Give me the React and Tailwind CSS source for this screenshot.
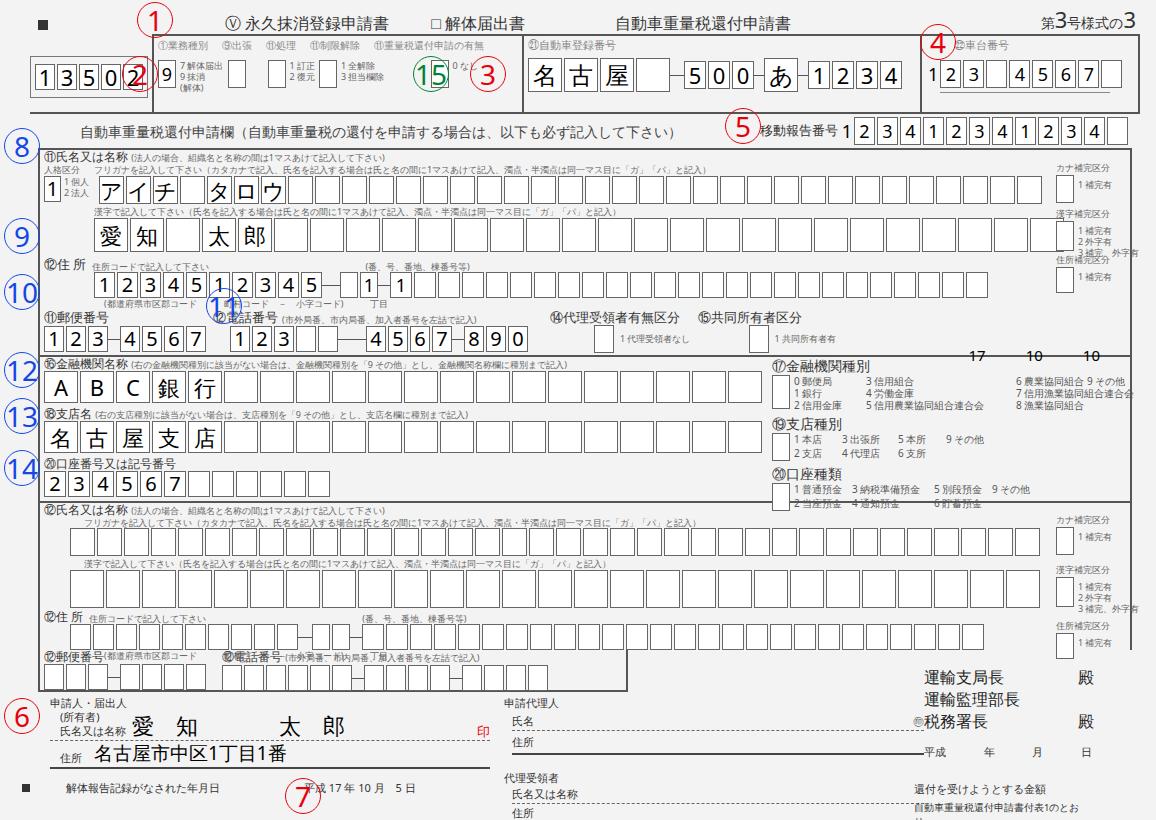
import React from "react";

const B = ({ c = "", w = "w-[25px]", h = "h-[28px]", t = "text-[20px]" }) => (
  <div className={`${w} ${h} ${t} shrink-0 border border-[#666] bg-white flex items-center justify-center leading-none text-black`}>{c}</div>
);
const Row = ({ chars = [], n, w, h, t, gap = "gap-[2px]" }) => (
  <div className={`flex ${gap}`}>
    {Array.from({ length: n }).map((_, i) => <B key={i} c={chars[i] || ""} w={w} h={h} t={t} />)}
  </div>
);
const Dash = ({ w = "w-[12px]" }) => <div className={`${w} h-px bg-[#555] self-center shrink-0`} />;
const Circ = ({ n, cls, color = "text-red-600 border-red-600" }) => (
  <div className={`absolute ${cls} ${color} w-[36px] h-[36px] rounded-full border-[1.5px] flex items-center justify-center text-[28px] leading-none font-['Liberation_Sans',sans-serif] bg-transparent`}>{n}</div>
);
const Small = ({ children, cls = "" }) => <div className={`text-[9px] leading-[11px] text-[#666] whitespace-nowrap ${cls}`}>{children}</div>;
const Side = ({ title, lines, h = "h-[28px]", top = "-top-[14px]" }) => (
  <div className={`absolute right-[4px] ${top} w-[66px]`}>
    <Small>{title}</Small>
    <div className="flex gap-[4px] mt-[2px]"><B w="w-[18px]" h={h} /><Small cls="mt-[4px]">{lines}</Small></div>
  </div>
);

export default function App() {
  const kana = "アイチ タロウ".split("");
  return (
    <div className="relative w-[1156px] h-[820px] bg-[#f3f3f3] overflow-hidden text-[#333] font-['Noto_Sans_CJK_JP',sans-serif]">
      {/* header */}
      <div className="flex items-end h-[34px] pl-[38px] pr-[20px]">
        <div className="w-[10px] h-[10px] bg-[#333] mb-[4px]" />
        <div className="ml-[177px] text-[16px] leading-[22px]">Ⓥ 永久抹消登録申請書</div>
        <div className="ml-[42px] text-[16px] leading-[22px]">□ 解体届出書</div>
        <div className="ml-[90px] text-[16px] leading-[22px]">自動車重量税還付申請書</div>
        <div className="ml-auto text-[14px] leading-[22px]">第<span className="text-[22px] font-['Liberation_Sans']">3</span>号様式の<span className="text-[22px] font-['Liberation_Sans']">3</span></div>
      </div>
      {/* top boxes */}
      <div className="flex h-[78px] ml-[30px] w-[1110px]">
        <div className="w-[118px] mt-[22px] h-[42px] border border-[#777] flex items-center justify-center">
          <Row n={5} chars={["1", "3", "5", "0", "2"]} w="w-[20px]" h="h-[26px]" t="text-[22px]" />
        </div>
        <div className="w-[370px] ml-[4px] border-t-2 border-l-2 border-[#555] px-[4px] pt-[2px]">
          <div className="flex gap-[14px] text-[10px] leading-[14px] text-[#888]"><span>①業務種別</span><span>⑨出張</span><span>⑪処理</span><span>⑪制限解除</span><span>⑪重量税還付申請の有無</span></div>
          <div className="flex items-start gap-[4px] mt-[8px]">
            <B c="9" w="w-[18px]" h="h-[28px]" t="text-[18px]" />
            <Small>7 解体届出<br />9 抹消<br />(解体)</Small>
            <B w="w-[18px]" h="h-[28px]" />
            <div className="w-[14px]" />
            <B w="w-[18px]" h="h-[28px]" />
            <Small>1 訂正<br />2 復元</Small>
            <B w="w-[18px]" h="h-[28px]" />
            <Small>1 全解除<br />3 担当欄除</Small>
            <div className="w-[38px]" />
            <B w="w-[18px]" h="h-[28px]" />
            <Small>0 なし</Small>
          </div>
        </div>
        <div className="w-[398px] border-t-2 border-l-2 border-[#555] px-[4px] pt-[2px]">
          <div className="text-[11px] leading-[14px] text-[#888]">㉑自動車登録番号</div>
          <div className="flex items-center mt-[6px]">
            <Row n={4} chars={["名", "古", "屋"]} w="w-[34px]" h="h-[34px]" t="text-[24px]" />
            <Dash w="w-[14px]" />
            <Row n={3} chars={["5", "0", "0"]} w="w-[22px]" h="h-[28px]" t="text-[22px]" />
            <Dash w="w-[10px]" />
            <B c="あ" w="w-[34px]" h="h-[34px]" t="text-[24px]" />
            <Dash w="w-[10px]" />
            <Row n={4} chars={["1", "2", "3", "4"]} w="w-[22px]" h="h-[28px]" t="text-[22px]" />
          </div>
        </div>
        <div className="flex-1 border-t-2 border-l-2 border-r-2 border-[#555] px-[6px] pt-[2px]">
          <div className="text-[11px] leading-[14px] text-[#888] ml-[26px]">㉒車台番号</div>
          <div className="flex items-center gap-[2px] mt-[8px]">
            <span className="text-[18px] text-black">1</span>
            <Row n={8} chars={["2", "3", "", "4", "5", "6", "7", ""]} w="w-[21px]" h="h-[28px]" t="text-[18px]" />
          </div>
          <div className="h-[3px] mt-[2px] ml-[12px] w-[170px] border-b border-[#888]" />
        </div>
      </div>
      {/* subtitle + moving report */}
      <div className="flex items-center h-[36px] ml-[30px] w-[1110px] border-t-2 border-[#555]">
        <div className="ml-[50px] text-[14px] text-[#444]">自動車重量税還付申請欄（自動車重量税の還付を申請する場合は、以下も必ず記入して下さい）</div>
        <div className="ml-auto flex items-center gap-[2px] pr-[12px]">
          <span className="text-[13px] mr-[2px]">移動報告番号</span>
          <span className="text-[18px] text-black">1</span>
          <Row n={12} chars={["2", "3", "4", "1", "2", "3", "4", "1", "2", "3", "4", ""]} w="w-[21px]" h="h-[28px]" t="text-[18px]" />
        </div>
      </div>
      {/* main box */}
      <div className="ml-[38px] w-[1094px] h-[502px] border-2 border-[#555] border-b-0 relative">
        <div className="px-[4px]">
          <div className="h-[14px] text-[12px] leading-[14px]">⑪氏名又は名称 <span className="text-[9px] text-[#666]">(法人の場合、組織名と名称の間は1マスあけて記入して下さい)</span></div>
          <div className="flex gap-[6px] h-[12px]"><Small>人格区分</Small><Small cls="ml-[8px]">フリガナを記入して下さい（カタカナで記入、氏名を記入する場合は氏と名の間に1マスあけて記入、濁点・半濁点は同一マス目に「ガ」「パ」と記入）</Small></div>
          <div className="relative flex items-start gap-[3px] h-[28px]">
            <B c="1" w="w-[17px]" h="h-[26px]" />
            <Small cls="w-[32px]">1 個人<br />2 法人</Small>
            <Row n={35} chars={kana} w="w-[25px]" h="h-[28px]" t="text-[22px]" />
            <Side title="カナ補完区分" lines="1 補完有" />
          </div>
          <Small cls="ml-[50px] h-[14px] pt-[2px]">漢字で記入して下さい（氏名を記入する場合は氏と名の間に1マスあけて記入、濁点・半濁点は同一マス目に「ガ」「パ」と記入）</Small>
          <div className="relative flex items-start h-[34px]">
            <div className="w-[50px]" />
            <Row n={27} chars={["愛", "知", "", "太", "郎"]} w="w-[34px]" h="h-[34px]" t="text-[22px]" />
            <Side title="漢字補完区分" lines={<>1 補完有<br />2 外字有<br />3 補完、外字有</>} h="h-[30px]" top="-top-[10px]" />
          </div>
          <div className="flex items-end gap-[6px] h-[20px]"><span className="text-[13px] leading-[16px]">⑫住 所</span><Small>住所コードで記入して下さい</Small><Small cls="ml-[150px]">(番、号、番地、棟番号等)</Small></div>
          <div className="relative flex items-center h-[26px]">
            <div className="w-[50px]" />
            <Row n={10} chars={"1234512345".split("")} w="w-[21px]" h="h-[26px]" t="text-[20px]" />
            <Dash w="w-[18px]" />
            <Row n={2} chars={["", "1"]} w="w-[18px]" h="h-[26px]" t="text-[18px]" />
            <Dash w="w-[12px]" />
            <Row n={25} chars={["1"]} w="w-[22px]" h="h-[26px]" t="text-[18px]" />
            <Side title="住所補完区分" lines="1 補完有" h="h-[26px]" top="-top-[18px]" />
          </div>
          <Small cls="ml-[60px] h-[11px]">(都道府県市区郡コード　　　町村コード　－　小字コード)　　　丁目</Small>
          <div className="flex items-end gap-[4px] h-[16px]"><span className="text-[13px] leading-[16px]">⑪郵便番号</span><span className="ml-[100px] text-[13px] leading-[16px]">⑫電話番号</span><Small>(市外局番、市内局番、加入者番号を左詰で記入)</Small><span className="ml-[70px] text-[13px] leading-[16px]">⑭代理受領者有無区分</span><span className="ml-[14px] text-[13px] leading-[16px]">⑮共同所有者区分</span></div>
          <div className="flex items-center h-[28px]">
            <Row n={3} chars={"123".split("")} w="w-[20px]" h="h-[26px]" />
            <Dash />
            <Row n={4} chars={"4567".split("")} w="w-[20px]" h="h-[26px]" />
            <div className="w-[24px]" />
            <Row n={5} chars={["1", "2", "3"]} w="w-[20px]" h="h-[26px]" />
            <Dash w="w-[28px]" />
            <Row n={4} chars={"4567".split("")} w="w-[20px]" h="h-[26px]" />
            <Dash />
            <Row n={3} chars={"890".split("")} w="w-[20px]" h="h-[26px]" />
            <div className="ml-[66px] flex gap-[6px]"><B w="w-[20px]" h="h-[28px]" /><Small cls="mt-[8px]">1 代理受領者なし</Small></div>
            <div className="ml-[58px] flex gap-[6px]"><B w="w-[20px]" h="h-[28px]" /><Small cls="mt-[8px]">1 共同所有者有</Small></div>
          </div>
        </div>
        <div className="border-t-2 border-[#555] mt-[2px] flex px-[4px] h-[146px]">
          <div className="w-[720px]">
            <div className="text-[12px] leading-[14px] h-[14px]">⑯金融機関名称 <span className="text-[9px] text-[#666]">(右の金融機関種別に該当がない場合は、金融機関種別を「9 その他」とし、金融機関名称欄に種別まで記入)</span></div>
            <Row n={20} chars={["A", "B", "C", "銀", "行"]} w="w-[34px]" h="h-[32px]" t="text-[22px]" />
            <div className="text-[12px] leading-[14px] h-[14px] mt-[4px]">⑱支店名 <span className="text-[9px] text-[#666]">(右の支店種別に該当がない場合は、支店種別を「9 その他」とし、支店名欄に種別まで記入)</span></div>
            <Row n={20} chars={["名", "古", "屋", "支", "店"]} w="w-[34px]" h="h-[32px]" t="text-[22px]" />
            <div className="text-[12px] leading-[14px] h-[14px] mt-[4px]">⑳口座番号又は記号番号</div>
            <Row n={12} chars={"234567".split("")} w="w-[22px]" h="h-[26px]" t="text-[20px]" />
          </div>
          <div className="ml-[10px] text-[10px] text-[#555] leading-[12px]">
            <div className="text-[14px] leading-[18px] text-[#333]">⑰金融機関種別</div>
            <div className="flex gap-[4px]"><B w="w-[18px]" h="h-[34px]" /><div className="grid grid-cols-[72px_150px_130px]"><span>0 郵便局</span><span>3 信用組合</span><span>6 農業協同組合 9 その他</span><span>1 銀行</span><span>4 労働金庫</span><span>7 信用漁業協同組合連合会</span><span>2 信用金庫</span><span>5 信用農業協同組合連合会</span><span>8 漁業協同組合</span></div></div>
            <div className="text-[14px] leading-[18px] text-[#333] mt-[4px]">⑲支店種別</div>
            <div className="flex gap-[4px]"><B w="w-[18px]" h="h-[28px]" /><div className="grid grid-cols-[48px_56px_48px_60px]"><span>1 本店</span><span>3 出張所</span><span>5 本所</span><span>9 その他</span><span>2 支店</span><span>4 代理店</span><span>6 支所</span></div></div>
            <div className="text-[14px] leading-[18px] text-[#333] mt-[4px]">⑳口座種類</div>
            <div className="flex gap-[4px]"><B w="w-[18px]" h="h-[28px]" /><div className="grid grid-cols-[58px_82px_58px_60px]"><span>1 普通預金</span><span>3 納税準備預金</span><span>5 別段預金</span><span>9 その他</span><span>2 当座預金</span><span>4 通知預金</span><span>6 貯蓄預金</span></div></div>
          </div>
        </div>
        <div className="absolute right-[30px] top-[194px] text-[15px] text-black flex gap-[40px] font-['Liberation_Sans_Narrow','Liberation_Sans',sans-serif]"><span>17</span><span>10</span><span>10</span></div>
        <div className="border-t-2 border-[#555] px-[4px]">
          <div className="text-[12px] leading-[14px] h-[14px]">⑫氏名又は名称 <span className="text-[9px] text-[#666]">(法人の場合、組織名と名称の間は1マスあけて記入して下さい)</span></div>
          <Small cls="ml-[40px] h-[11px]">フリガナを記入して下さい（カタカナで記入、氏名を記入する場合は氏と名の間に1マスあけて記入、濁点・半濁点は同一マス目に「ガ」「パ」と記入）</Small>
          <div className="relative flex items-start h-[28px]"><div className="w-[26px]" /><Row n={36} w="w-[25px]" h="h-[28px]" /><Side title="カナ補完区分" lines="1 補完有" /></div>
          <Small cls="ml-[40px] h-[14px] pt-[2px]">漢字で記入して下さい（氏名を記入する場合は氏と名の間に1マスあけて記入、濁点・半濁点は同一マス目に「ガ」「パ」と記入）</Small>
          <div className="relative flex items-start h-[38px]"><div className="w-[26px]" /><Row n={27} w="w-[34px]" h="h-[38px]" /><Side title="漢字補完区分" lines={<>1 補完有<br />2 外字有<br />3 補完、外字有</>} h="h-[30px]" top="-top-[6px]" /></div>
          <div className="flex items-end gap-[6px] h-[16px]"><span className="text-[12px] leading-[14px]">⑫住 所</span><Small>住所コードで記入して下さい</Small><Small cls="ml-[150px]">(番、号、番地、棟番号等)</Small></div>
          <div className="relative flex items-center h-[26px]"><div className="w-[26px]" /><Row n={10} w="w-[21px]" h="h-[26px]" /><Dash w="w-[14px]" /><Row n={2} w="w-[18px]" h="h-[26px]" /><Dash /><Row n={26} w="w-[22px]" h="h-[26px]" /><Side title="住所補完区分" lines="1 補完有" h="h-[26px]" top="-top-[4px]" /></div>
          <Small cls="ml-[60px] h-[11px]">(都道府県市区郡コード　　　町村コード　－　小字コード)　　　丁目</Small>
        </div>
      </div>
      {/* bottom-left of main box */}
      <div className="ml-[38px] w-[590px] h-[42px] border-2 border-t-0 border-[#555] px-[4px] flex gap-[16px]">
        <div><div className="text-[12px] leading-[14px]">⑫郵便番号</div><div className="flex items-center"><Row n={3} w="w-[20px]" h="h-[26px]" /><Dash /><Row n={4} w="w-[20px]" h="h-[26px]" /></div></div>
        <div><div className="text-[12px] leading-[14px]">⑫電話番号 <span className="text-[9px] text-[#666]">(市外局番、市内局番、加入者番号を左詰で記入)</span></div><div className="flex items-center"><Row n={6} w="w-[20px]" h="h-[26px]" /><Dash /><Row n={4} w="w-[20px]" h="h-[26px]" /><Dash /><Row n={4} w="w-[20px]" h="h-[26px]" /></div></div>
      </div>
      {/* bottom */}
      <div className="flex ml-[50px]">
        <div className="w-[440px] pt-[4px] text-[11px] leading-[14px]">
          <div>申請人・届出人</div>
          <div className="flex items-end border-b border-dashed border-[#666] pb-[2px]">
            <div className="leading-[14px] ml-[10px]">(所有者)<br />氏名又は名称</div>
            <div className="ml-[6px] text-[22px] leading-[26px] text-black tracking-[8px]">愛 知　　 太 郎</div>
            <div className="ml-auto text-red-600 text-[13px]">印</div>
          </div>
          <div className="flex items-end border-b-2 border-[#444] pb-[2px]"><span className="ml-[10px]">住所</span><span className="ml-[12px] text-[19px] leading-[24px] text-black">名古屋市中区1丁目1番</span></div>
          <div className="flex items-center mt-[12px] -ml-[28px]">
            <div className="w-[8px] h-[8px] bg-[#333]" />
            <span className="ml-[36px]">解体報告記録がなされた年月日</span>
            <span className="ml-[84px]">平成 17 年 10 月　5 日</span>
          </div>
        </div>
        <div className="w-[420px] ml-[14px] pt-[4px] text-[11px] leading-[14px]">
          <div>申請代理人</div>
          <div className="flex border-b border-dashed border-[#666] mt-[4px] ml-[8px] pb-[2px]"><span>氏名</span><span className="ml-auto">㊞</span></div>
          <div className="border-b-2 border-[#444] mt-[4px] ml-[8px] pb-[4px]">住所</div>
          <div className="mt-[16px]">代理受領者</div>
          <div className="border-b border-dashed border-[#666] mt-[2px] ml-[8px] pb-[2px]">氏名又は名称</div>
          <div className="mt-[2px] ml-[8px]">住所</div>
        </div>
        <div className="-ml-[10px] -mt-[26px] w-[180px]">
          <div className="text-[16px] leading-[22px] ml-[10px] text-[#222]"><div className="flex justify-between"><span>運輸支局長</span><span>殿</span></div><div>運輸監理部長</div><div className="flex justify-between"><span>税務署長</span><span>殿</span></div></div>
          <div className="flex justify-between text-[11px] ml-[10px] mt-[12px] pr-[2px]"><span>平成</span><span>年</span><span>月</span><span>日</span></div>
          <div className="text-[11px] mt-[20px]">還付を受けようとする金額</div>
          <div className="text-[9.5px] mt-[4px] border-b-2 border-[#444] pb-[2px] w-[170px]">自動車重量税還付申請書付表1のとおり</div>
        </div>
      </div>
      {/* annotations */}
      <Circ n="1" cls="left-[137px] top-[2px]" />
      <Circ n="2" cls="left-[122px] top-[56px]" />
      <Circ n="3" cls="left-[470px] top-[56px]" />
      <Circ n="15" cls="left-[413px] top-[56px] text-[20px]" color="text-green-700 border-green-700" />
      <Circ n="4" cls="left-[920px] top-[24px]" />
      <Circ n="5" cls="left-[725px] top-[108px]" />
      <Circ n="8" cls="left-[4px] top-[128px]" color="text-blue-700 border-blue-700" />
      <Circ n="9" cls="left-[4px] top-[218px]" color="text-blue-700 border-blue-700" />
      <Circ n="10" cls="left-[4px] top-[274px] text-[22px]" color="text-blue-700 border-blue-700" />
      <Circ n="11" cls="left-[206px] top-[288px] text-[22px]" color="text-blue-700 border-blue-700" />
      <Circ n="12" cls="left-[4px] top-[352px] text-[22px]" color="text-blue-700 border-blue-700" />
      <Circ n="13" cls="left-[4px] top-[398px] text-[22px]" color="text-blue-700 border-blue-700" />
      <Circ n="14" cls="left-[4px] top-[450px] text-[22px]" color="text-blue-700 border-blue-700" />
      <Circ n="6" cls="left-[4px] top-[698px]" />
      <Circ n="7" cls="left-[285px] top-[778px]" />
    </div>
  );
}
